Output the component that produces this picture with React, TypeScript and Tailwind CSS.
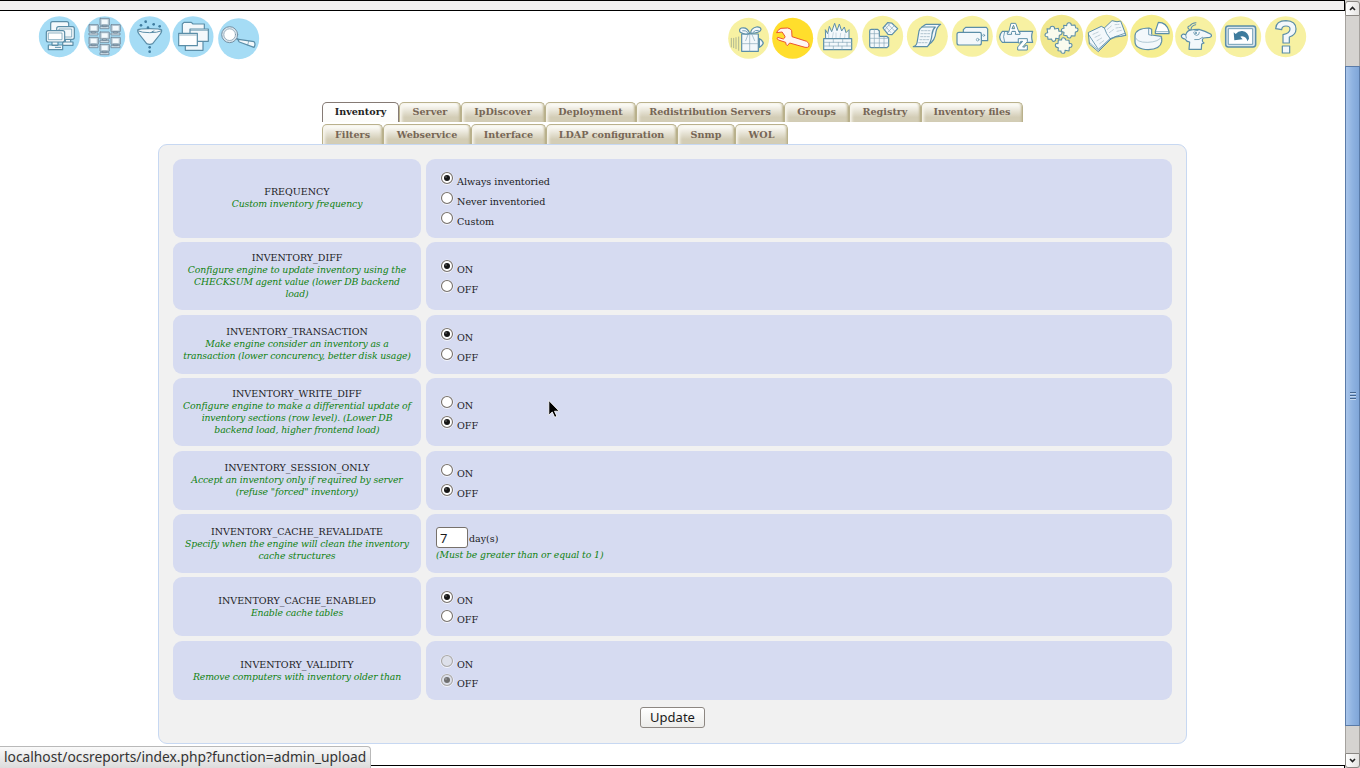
import React from 'react';

const BLUE = '#a5dcf5';
const PALE = '#f7f1a2';
const LINE = '#5b8ea8';
const FILL = '#f3f8fb';

type DrawingProps = {
  view: string;
  cx: number;
  cy: number;
  r?: number;
  bg: string;
  stroke?: string;
  children: React.ReactNode;
};

function Drawing({ view, cx, cy, r = 61.5, bg, stroke = LINE, children }: DrawingProps) {
  return (
    <svg className="h-[45px] w-[45px] shrink-0 overflow-visible" viewBox={view}>
      <circle cx={cx} cy={cy} r={r} fill={bg} />
      <g fill={FILL} stroke={stroke} strokeWidth="3.6" strokeLinejoin="round" strokeLinecap="round">
        {children}
      </g>
    </svg>
  );
}

function Screen({ x, y }: { x: number; y: number }) {
  return (
    <g strokeWidth="2.6" stroke="#74899a">
      <rect x={x} y={y} width="28" height="21" rx="1" fill="#b9cdd9" />
      <rect x={x + 5} y={y + 4} width="18" height="13" fill="#f4f9fc" stroke="none" />
      <path d={`M${x + 9} ${y + 21}h10v4h-10zM${x + 1} ${y + 25}h26v6h-26z`} fill="#dce8ef" />
    </g>
  );
}

function LeftIcons() {
  return (
    <div className="flex">
      <Drawing view="21 45 135 135" cx={88} cy={110} bg={BLUE}>
        <rect x="62" y="65" width="54" height="40" rx="6" />
        <path d="M98 126h31v10h-31zM106 117h16v9h-16z" />
        <rect x="80" y="80" width="53" height="38" rx="6" />
        <rect x="88" y="87" width="37" height="24" strokeWidth="2" />
        <path d="M66 124h18v12h-18zM55 135h43v14h-43z" />
        <path d="M76 142h16" strokeWidth="3" />
        <rect x="49" y="92" width="55" height="34" rx="6" />
        <rect x="56" y="99" width="40" height="20" strokeWidth="2" fill="#fff" />
      </Drawing>
      <Drawing view="156 45 135 135" cx={224} cy={110} bg={BLUE}>
        <Screen x={210} y={55} />
        <Screen x={177} y={74} />
        <Screen x={243} y={74} />
        <Screen x={210} y={96} />
        <Screen x={177} y={112} />
        <Screen x={243} y={112} />
        <Screen x={210} y={133} />
      </Drawing>
      <Drawing view="291 45 135 135" cx={359} cy={110} bg={BLUE}>
        <path d="M323 90q4-4 36-4t36 4q1 6-4 12l-23 29q-9 4-18 0l-23-29q-5-6-4-12z" />
        <path d="M325 93q10 5 34 5t34-5M366 95l6-2" strokeWidth="3" fill="none" />
        <g fill="#3f7c9f" stroke="none">
          <circle cx="347" cy="65" r="4" />
          <circle cx="333" cy="76" r="4" />
          <circle cx="371" cy="73" r="4" />
          <circle cx="354" cy="83" r="4" />
          <circle cx="389" cy="79" r="4" />
          <circle cx="359" cy="142" r="4" />
          <circle cx="359" cy="155" r="4" />
        </g>
      </Drawing>
      <Drawing view="426 45 135 135" cx={489} cy={110} bg={BLUE}>
        <path d="M457 101v-29l5-5h22l5 5h34v29z" />
        <path d="M466 149v-32h53v34h-53z" />
        <path d="M480 124v-37h55v37z" />
        <path d="M481 91h53" strokeWidth="2" />
        <path d="M446 137v-37h56v37z" fill="#fff" />
        <path d="M449 105h50" strokeWidth="2" />
      </Drawing>
      <Drawing view="561 45 135 135" cx={626} cy={116} bg={BLUE}>
        <path d="M626 118l46 7q6 7 0 17l-44-16q-5-4-2-8z" />
        <path d="M656 124l-3 11" strokeWidth="2" />
        <path d="M617 114l9 5" strokeWidth="5" />
        <circle cx="599" cy="104" r="24" fill="#dbe5ec" strokeWidth="3" stroke="#7592a6" />
        <circle cx="599" cy="104" r="17.5" fill="#fff" strokeWidth="2" stroke="#7592a6" />
      </Drawing>
    </div>
  );
}

function RightIcons() {
  return (
    <div className="flex">
      <Drawing view="18 45 135 135" cx={86} cy={115} bg={PALE}>
        <path d="M34 115v26M41 115v28M48 113v33M56 111v40" strokeWidth="2" stroke="#8d9a8a" />
        <path d="M118 116q8 3 12 13q-4 10-12 13z" />
        <path d="M65 102h50v52h-50z" />
        <path d="M66 131h48M89 104v49" strokeWidth="2" stroke="#86a8ba" />
        <path d="M89 100q-14 6-28-3q-6-8 3-13q18-4 25 16z" />
        <path d="M92 100q0-15 17-19q14-1 14 8q-3 10-31 11z" />
        <path d="M68 92q9-2 15 5M99 97q6-8 16-6" strokeWidth="2.5" fill="none" />
        <path d="M84 104l-7 18M96 104l8 18" strokeWidth="2" stroke="#86a8ba" />
      </Drawing>
      <Drawing view="153 45 135 135" cx={218} cy={115} bg="#ffde2c" stroke="#ec5530">
        <path d="M170 97q3-8 13-12l20-1q9 1 12 8l1 18 44 14q9 5 7 15-4 5-12 3l-46-13-7 8q-5-3-5-10l-22-7q-6-3-2-8l17 5q5-2 5-8l-8-12z" fill="#fff6f4" strokeWidth="3" />
      </Drawing>
      <Drawing view="288 45 135 135" cx={353} cy={115} bg={PALE}>
        <path d="M317 116l-1-27 7 12 5-22 7 16 9-25 7 22 7-20 7 21 8-12 5 17 9-9v27z" strokeWidth="3" />
        <path d="M326 114v-13M337 114l3-16M348 114v-15M360 114l2-14M374 114l1-12" strokeWidth="1.5" stroke="#9bb6c6" />
        <rect x="311" y="116" width="84" height="33" />
        <path d="M312 127h82M312 138h82" strokeWidth="2" stroke="#86a8ba" />
        <path d="M340 117v10M368 117v10M328 127v11M355 127v11M381 127v11M340 139v9M366 139v9" strokeWidth="2" stroke="#86a8ba" />
      </Drawing>
      <Drawing view="423 45 135 135" cx={488} cy={109} bg={PALE}>
        <path d="M449 93q0-5 5-5h19l5 5v16h22l6 5v24l-5 5h-47q-5 0-5-5z" />
        <path d="M463 89v53M478 109v33M492 110v32M450 101h27M450 115h55M450 129h55" strokeWidth="2" stroke="#86a8ba" />
        <path d="M489 84l14-16 12 1 18 17-17 18-12-1z" />
        <path d="M495 77l17 20M502 71l22 22M493 91l17-20M503 97l20-20" strokeWidth="2" stroke="#86a8ba" />
      </Drawing>
      <Drawing view="18 45 135 135" cx={82} cy={109} bg={PALE}>
        <path d="M65 82q11-9 13-9h44q-12 9-14 22-3 29-22 38l-12 2z" />
        <path d="M57 93q2-9 10-12h39q-9 8-10 22-2 24-14 37h-42q11-3 12-17z" />
        <path d="M64 92h28M63 101h28M62 110h28M60 119h26M56 128h25" strokeWidth="2" stroke="#8fabbb" strokeDasharray="6 4" />
      </Drawing>
      <Drawing view="153 45 135 135" cx={217} cy={109} bg={PALE}>
        <path d="M190 123v-34l7-7h62l4 5v35h-73z" />
        <circle cx="251" cy="106" r="3" strokeWidth="2" />
        <path d="M171 103q0-6 6-6h62q5 0 5 5v27q0 6-6 6h-61q-6 0-6-6z" />
        <circle cx="233" cy="119" r="4" strokeWidth="2" />
      </Drawing>
      <Drawing view="288 45 135 135" cx={350} cy={109} bg={PALE}>
        <path d="M307 94h91q-6 16 0 33h-91q-16-16 0-33z" />
        <path d="M314 94q-7 16 0 33" strokeWidth="2.5" fill="none" />
        <path d="M334 70h13l10 27h3v6h-14l1-5-1-4h-10l-2 4 1 5h-13v-6h3zM337 86h7l-3-9z" strokeWidth="3" fill="#fff" fillRule="evenodd" />
        <path d="M356 116h26v9l-14 16h7v-5h7v14h-29v-9l15-17h-6v5h-6z" strokeWidth="3" fill="#fff" />
      </Drawing>
      <Drawing view="423 45 135 135" cx={485} cy={109} r={64.5} bg="#f1e88f">
        <g strokeWidth="3.2" fill="#fafbee">
          <path d="M441 86l9 1q0-8 7-8t7 8l11-2 2 9q8-2 9 4t-8 8l-1 10-10-1q1 8-5 9t-7-7l-11 1-1-8q-8 1-8-5t8-7z" />
          <path d="M491 76l9 1q0-9 7-9t7 8l11-1 2 9q7-1 7 5t-8 7l-1 12-11-1q-1 8-7 7t-6-7l-10-1 1-9q-8 0-8-6t8-6z" />
          <path d="M475 119l10 1q-1-7 5-7t7 7l10 1 1 10q8-2 8 5t-8 6l-1 11-12-2q1 9-6 9t-6-7l-9-1 1-9q-9 0-9-7t8-5z" />
        </g>
      </Drawing>
      <Drawing view="558 45 135 135" cx={620} cy={109} r={64.5} bg="#f6ec94">
        <path d="M566 97l38-18 9 5 23-22q17 6 26 1l16 43q-16 5-30 3l-15 8-38 38-26-22z" strokeWidth="3" />
        <path d="M613 84q5 18 18 33M566 104l29 44 35-32 44-16" strokeWidth="2.5" fill="none" />
        <path d="M569 128l27 23 35-34 45-12" strokeWidth="1.6" fill="none" />
        <path d="M579 103l18-8M585 112l17-8M591 122l14-8M599 131l12-9M622 88l12-10M628 98l12-9M645 74l12-1M648 84l14-2M651 94l13-3" strokeWidth="2" stroke="#a5bac6" strokeDasharray="7 3" />
      </Drawing>
      <Drawing view="93 45 135 135" cx={155} cy={109} r={64.5} bg="#f6ee8f">
        <path d="M105 107q2-22 42-23l8 4v17l29 4q2 7 1 16-4 23-40 24-40-2-40-24z" />
        <path d="M105 110q4 18 38 17t42-17" strokeWidth="2" stroke="#8fb0c0" fill="none" />
        <path d="M146 85v19l9 2" strokeWidth="2.5" />
        <path d="M166 94l9-27q25 0 32 27v7h-41z" fill="#fff" />
        <path d="M167 95h39" strokeWidth="2" />
      </Drawing>
      <Drawing view="228 45 135 135" cx={287} cy={110} bg={PALE}>
        <path d="M260 98q6-9 20-9l17-1q18 4 36 15 4 7-4 9l-19 2q-7 9 2 15l-7 3-1 16h-37l2-22q-10-1-14-9-11-2-11-10 4-8 13-3z" />
        <path d="M268 89q-10-9 2-12 5-8 18-9M273 89q0-12 14-15" fill="none" strokeWidth="3.2" />
        <path d="M284 119q14 3 24-7M257 104l2 10M284 93l10-2" strokeWidth="2.5" fill="none" />
        <path d="M281 97q1 9 9 9t8-9" strokeWidth="2.5" fill="#fff" />
        <circle cx="288" cy="99" r="3" fill={LINE} stroke="none" />
      </Drawing>
      <Drawing view="363 45 135 135" cx={422} cy={110} bg={PALE}>
        <rect x="377" y="78" width="90" height="63" rx="8" strokeWidth="4.5" fill="#d9e6ee" />
        <rect x="386" y="86" width="72" height="47" strokeWidth="2.5" fill="#fff" />
        <path d="M401 97l6 5q8-10 20-9 19 3 20 23l-5 8q-2-14-16-15l-5 1 7 8-25 3z" fill="#3e7b9d" stroke="none" />
      </Drawing>
      <Drawing view="498 45 135 135" cx={557} cy={110} bg={PALE}>
        <path d="M527 86q1-24 31-24 30 1 30 25 0 18-20 24v18h-19v-25q21-4 21-17 0-9-12-9-12 0-13 11z" />
        <path d="M547 138h22v21h-22z" />
      </Drawing>
    </div>
  );
}

type TabDef = { label: string; box: string; active?: boolean };

const TABS_TOP: TabDef[] = [
  { label: 'Inventory', box: 'w-[77px]', active: true },
  { label: 'Server', box: 'w-[62px]' },
  { label: 'IpDiscover', box: 'w-[84px]' },
  { label: 'Deployment', box: 'w-[91px]' },
  { label: 'Redistribution Servers', box: 'w-[148px]' },
  { label: 'Groups', box: 'w-[65px]' },
  { label: 'Registry', box: 'w-[72px]' },
  { label: 'Inventory files', box: 'w-[102px]' },
];

const TABS_BOTTOM: TabDef[] = [
  { label: 'Filters', box: 'w-[61px]' },
  { label: 'Webservice', box: 'w-[88px]' },
  { label: 'Interface', box: 'w-[75px]' },
  { label: 'LDAP configuration', box: 'w-[131px]' },
  { label: 'Snmp', box: 'w-[58px]' },
  { label: 'WOL', box: 'w-[53px]' },
];

function Tab({ label, box, active }: TabDef) {
  const look = active
    ? 'border-[#857a74] bg-white text-[#222] bg-linear-to-b from-white to-[#fcfcfa]'
    : 'border-[#b9b18c] text-[#776655] bg-linear-to-b from-[#fbfaf6] from-10% via-[#e2dece] via-50% to-[#d3cdb6] to-75% shadow-[inset_3px_2px_3px_-1px_#f7f5ec,inset_-2px_0_2px_-1px_#c2ba98]';
  return (
    <button
      className={`${box} ${look} h-5 shrink-0 rounded-t-[5px] border border-b-0 text-center text-[9.6px] whitespace-nowrap font-bold`}
    >
      {label}
    </button>
  );
}

function Radio({ label, checked, disabled, pitch }: { label: string; checked: boolean; disabled?: boolean; pitch: string }) {
  return (
    <label className={`${pitch} flex items-start`}>
      <svg className="mt-[3px] h-[14px] w-[14px] shrink-0" viewBox="0 0 14 14">
        <circle cx="7" cy="7.3" r="6.2" fill="none" stroke="#fff" strokeWidth="1" opacity="0.7" />
        <circle cx="7" cy="7" r="5.5" fill={disabled ? '#dde0ea' : '#fff'} stroke={disabled ? '#aaa8a6' : '#77716b'} strokeWidth="1.1" />
        {checked && <circle cx="7" cy="7" r="3" fill={disabled ? '#6f6f70' : '#161616'} />}
        {checked && <circle cx="6" cy="6" r="0.8" fill={disabled ? '#a8a8a8' : '#777'} />}
      </svg>
      <span className="mt-2 ml-[3px] text-[9.6px] leading-3">{label}</span>
    </label>
  );
}

type Setting = {
  name: string;
  help: string[];
  size: string;
  nudge?: string;
  pad: string;
  pitch?: string;
  options?: string[];
  value?: number;
  disabled?: boolean;
};

const SETTINGS: Setting[] = [
  { name: 'FREQUENCY', help: ['Custom inventory frequency'], size: 'h-[79px] mb-1', nudge: 'pb-0.5', pad: 'pt-[9px]', options: ['Always inventoried', 'Never inventoried', 'Custom'], value: 0 },
  { name: 'INVENTORY_DIFF', help: ['Configure engine to update inventory using the', 'CHECKSUM agent value (lower DB backend', 'load)'], size: 'h-[68px] mb-[5px]', pad: 'pt-[14px]', value: 0 },
  { name: 'INVENTORY_TRANSACTION', help: ['Make engine consider an inventory as a', 'transaction (lower concurency, better disk usage)'], size: 'h-[59px] mb-1', nudge: 'pb-0.5', pad: 'pt-[9px]', value: 0 },
  { name: 'INVENTORY_WRITE_DIFF', help: ['Configure engine to make a differential update of', 'inventory sections (row level). (Lower DB', 'backend load, higher frontend load)'], size: 'h-[68px] mb-[5px]', pad: 'pt-[14px]', value: 1 },
  { name: 'INVENTORY_SESSION_ONLY', help: ['Accept an inventory only if required by server', '(refuse "forced" inventory)'], size: 'h-[59px] mb-1', nudge: 'pb-0.5', pad: 'pt-[9px]', value: 1 },
  { name: 'INVENTORY_CACHE_REVALIDATE', help: ['Specify when the engine will clean the inventory', 'cache structures'], size: 'h-[59px] mb-1', pad: 'pt-[13px]' },
  { name: 'INVENTORY_CACHE_ENABLED', help: ['Enable cache tables'], size: 'h-[59px] mb-[5px]', pad: 'pt-[10px]', pitch: 'h-[19px]', value: 0 },
  { name: 'INVENTORY_VALIDITY', help: ['Remove computers with inventory older than'], size: 'h-[59px]', pad: 'pt-[10px]', pitch: 'h-[19px]', value: 1, disabled: true },
];

function SettingRow({ s }: { s: Setting }) {
  const options = s.options ?? ['ON', 'OFF'];
  return (
    <div className={`${s.size} flex gap-[5px]`}>
      <div className={`${s.nudge ?? ''} flex w-[248px] flex-col items-center justify-center rounded-[9px] bg-[#d6dbf1] leading-3 whitespace-nowrap`}>
        <span>{s.name}</span>
        {s.help.map((line) => (
          <span key={line} className="text-[9.3px] leading-3 tracking-[-0.13px] text-[#108210] italic">{line}</span>
        ))}
      </div>
      <div className={`${s.pad} flex w-[746px] flex-col rounded-[9px] bg-[#d6dbf1]`}>
        {s.value === undefined ? (
          <div className="pl-[10px]">
            <div className="flex">
              <input className="h-[21px] w-8 rounded-[3px] border border-[#77716b] bg-white pl-[3px] font-['Noto_Sans',sans-serif] text-[13px] text-[#1a1a1a]" defaultValue="7" />
              <span className="mt-[6px] ml-px leading-3">day(s)</span>
            </div>
            <div className="mt-px text-[9.3px] leading-3 tracking-[-0.1px] text-[#108210] italic">(Must be greater than or equal to 1)</div>
          </div>
        ) : (
          <div className="pl-[14px]">
            {options.map((o, i) => (
              <Radio key={o} label={o} checked={i === s.value} disabled={s.disabled} pitch={s.pitch ?? 'h-5'} />
            ))}
          </div>
        )}
      </div>
    </div>
  );
}

function Scrollbar() {
  return (
    <div className="flex w-[15px] shrink-0 flex-col bg-[#d5d3d0] pt-px">
      <div className="flex h-[15px] items-center justify-center rounded-t-[3px] border border-[#8a8783] bg-linear-to-r from-white to-[#e4e3e1]">
        <svg className="h-[5px] w-[7px]" viewBox="0 0 7 5"><path d="M1 4l2.5-2.5L6 4" fill="none" stroke="#222" strokeWidth="1.6" /></svg>
      </div>
      <div className="h-[50px] border-x border-[#a5a29e]" />
      <div className="flex h-[660px] flex-col items-center justify-center gap-px border border-[#5a7ba8] bg-linear-to-r from-[#a9c5ea] via-[#8fb3e1] to-[#80a6d8] pb-0.5">
        <div className="h-px w-[6px] bg-[#45668f] shadow-[0_1px_0_#c4d8f0]" />
        <div className="mt-px h-px w-[6px] bg-[#45668f] shadow-[0_1px_0_#c4d8f0]" />
        <div className="mt-px h-px w-[6px] bg-[#45668f] shadow-[0_1px_0_#c4d8f0]" />
      </div>
      <div className="h-[27px] border-x border-[#a5a29e]" />
      <div className="flex h-[15px] items-center justify-center rounded-b-[3px] border border-[#8a8783] bg-linear-to-r from-white to-[#e4e3e1]">
        <svg className="h-[5px] w-[7px]" viewBox="0 0 7 5"><path d="M1 1l2.5 2.5L6 1" fill="none" stroke="#222" strokeWidth="1.6" /></svg>
      </div>
    </div>
  );
}

export default function App() {
  return (
    <div className="relative flex h-[768px] w-[1360px] overflow-hidden bg-white font-['DejaVu_Serif',serif] text-[9.5px] text-[#1c1c24]">
      <div className="flex w-[1345px] shrink-0 flex-col">
        <div className="h-[11px] shrink-0 border-y border-r border-black bg-[#f1f0f0]" />
        <div className="mt-1 flex h-[45px] shrink-0 justify-between pr-[34px] pl-[37px]">
          <LeftIcons />
          <RightIcons />
        </div>
        <div className="mt-[42px] ml-[322px] flex h-[42px] shrink-0 flex-col gap-0.5">
          <div className="flex leading-[16px] *:pb-0.5">{TABS_TOP.map((t) => <Tab key={t.label} {...t} />)}</div>
          <div className="flex leading-[18px]">{TABS_BOTTOM.map((t) => <Tab key={t.label} {...t} />)}</div>
        </div>
        <div className="ml-[158px] h-[600px] w-[1029px] shrink-0 rounded-[9px] border border-[#c7d8f2] bg-[#f1f1f1] px-[14px] pt-[14px]">
          {SETTINGS.map((s) => <SettingRow key={s.name} s={s} />)}
          <div className="mt-[7px] flex justify-center">
            <button className="h-[21px] w-[65px] rounded-[3px] border border-[#8d8782] bg-linear-to-b from-white to-[#ececea] font-['Noto_Sans',sans-serif] text-[13px] leading-[19px] text-[#1a1a1a]">Update</button>
          </div>
        </div>
        <div className="mt-[21px] h-[3px] shrink-0 border-t border-r border-black bg-white" />
      </div>
      <Scrollbar />
      <div className="absolute bottom-0 left-0 h-[22px] w-[371px] rounded-tr-[4px] border-t border-r border-[#b9b9b9] bg-linear-to-b from-[#fafafa] to-[#dcdcdc] pl-1 font-['Noto_Sans',sans-serif] text-[13.8px] leading-[20px] whitespace-nowrap text-[#333]">
        localhost/ocsreports/index.php?function=admin_upload
      </div>
      <svg className="absolute top-[400px] left-[548px] h-[19px] w-[13px]" viewBox="0 0 13 20">
        <path d="M0.5 0.5v15.5l3.6-3.4 2.6 5.6 2.3-1-2.5-5.4h5z" fill="#000" stroke="#fff" strokeWidth="0.9" />
      </svg>
    </div>
  );
}
